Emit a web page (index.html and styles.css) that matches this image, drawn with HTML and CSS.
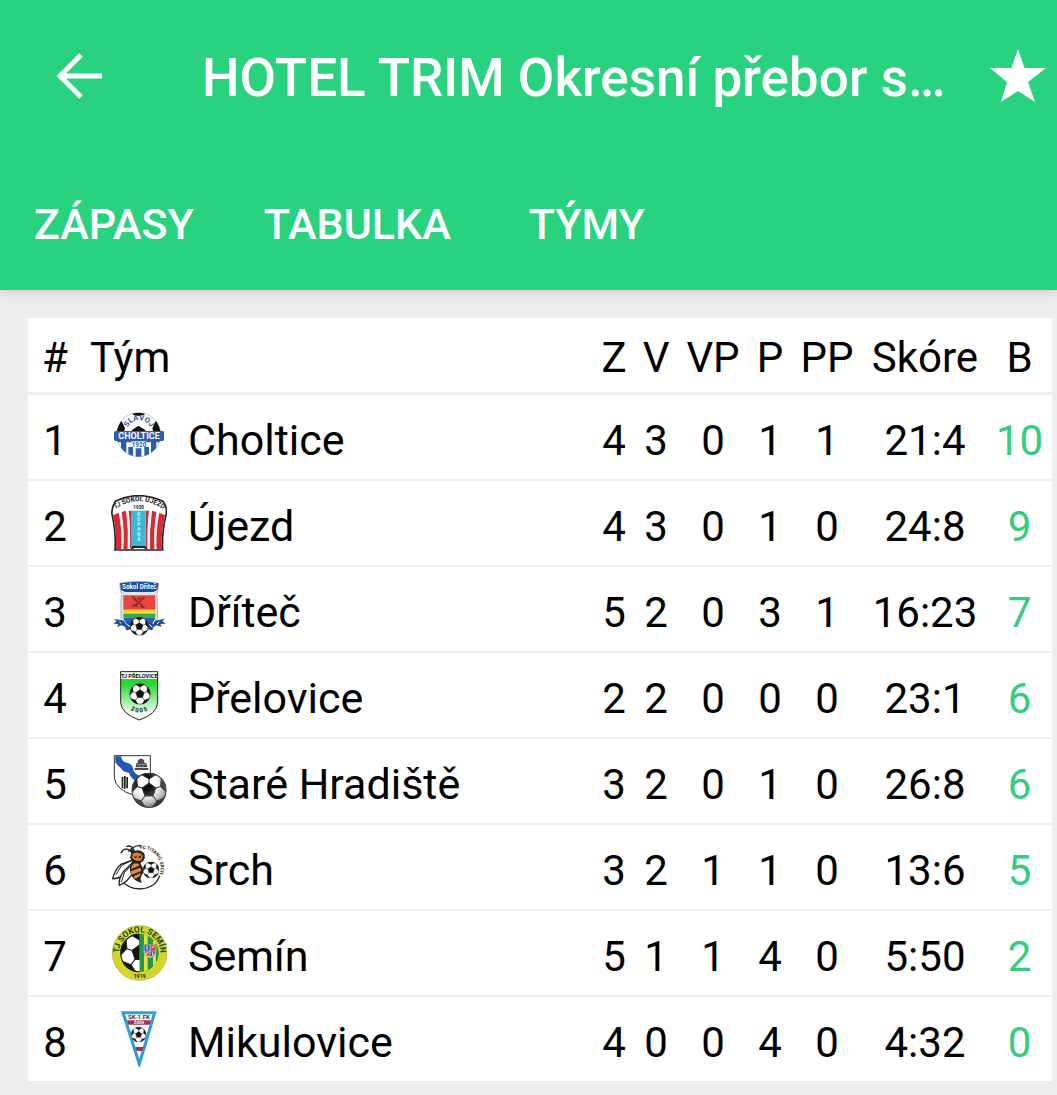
FILE: index.html
```html
<!DOCTYPE html>
<html lang="cs">
  <head>
    <meta charset="UTF-8" />
    <meta name="viewport" content="width=device-width, initial-scale=1.0" />
    <title>HOTEL TRIM Okresní přebor</title>
    <link rel="stylesheet" href="styles.css">
  </head>
  <body>
    <!-- shared football used by the club badges -->
    <svg class="defs" aria-hidden="true">
      <symbol id="ball" viewBox="-52 -52 104 104">
        <circle r="50" fill="#fff" stroke="#111" stroke-width="3" />
        <g stroke="#222" stroke-width="3">
          <path d="M0-19V-42M18-6L40-13M11 15L25 34M-11 15L-25 34M-18-6L-40-13M-18-46L0-38L18-46M38-32L38-13L49 2M42 27L25 32L13 48M-42 27L-25 32L-13 48M-38-32L-38-13L-49 2" fill="none" />
          <path d="M0-21L20-7L12 17L-12 17L-20-7Z" fill="#111" />
          <path d="M-20-46L0-34L20-46Q0-53-20-46ZM36-34L34-12L49 4Q51-17 36-34ZM44 23L23 31L12 48Q34 43 44 23ZM-44 23L-23 31L-12 48Q-34 43-44 23ZM-36-34L-34-12L-49 4Q-51-17-36-34Z" fill="#111" />
        </g>
      </symbol>
    </svg>

    <header>
      <div class="top-bar">
        <button class="icon-btn back" aria-label="Zpět">
          <svg width="46" height="46" viewBox="0 0 46 46">
            <path d="M46 23H6M25 2L4 23L25 44" fill="none" stroke="#fff" stroke-width="5" />
          </svg>
        </button>
        <h1>HOTEL TRIM Okresní přebor s…</h1>
        <button class="icon-btn star" aria-label="Oblíbené">
          <svg width="56" height="54" viewBox="0 0 56 54">
            <path d="M28 0L34.500 19H56L38 33L45 53L28 42L11 53L17 33L0 19H21.500Z" fill="#fff" />
          </svg>
        </button>
      </div>
      <nav class="tabs">
        <a href="#zapasy">ZÁPASY</a>
        <a href="#tabulka">TABULKA</a>
        <a href="#tymy">TÝMY</a>
      </nav>
    </header>

    <main>
      <table class="standings">
        <colgroup>
          <col class="col-rank" />
          <col />
          <col class="col-num" />
          <col class="col-num" />
          <col class="col-pair" />
          <col class="col-num" />
          <col class="col-pair" />
          <col class="col-score" />
          <col class="col-points" />
        </colgroup>
        <thead>
          <tr>
            <th>#</th>
            <th class="team-head">Tým</th>
            <th>Z</th>
            <th>V</th>
            <th>VP</th>
            <th>P</th>
            <th>PP</th>
            <th>Skóre</th>
            <th>B</th>
          </tr>
        </thead>
        <tbody>
          <tr>
            <td>1</td>
            <td class="team">
              <div class="team-row">
                <svg class="logo" viewBox="18 12 168 168">
                  <clipPath id="c1"><circle cx="101" cy="89" r="66" /></clipPath>
                  <circle cx="101" cy="89" r="66" fill="#fff" stroke="#aab" stroke-width="2" />
                  <g clip-path="url(#c1)">
                    <path d="M78 20H124L116 30L100 33L86 30ZM32 86L38 56L50 48L60 70L56 84ZM170 86L164 56L152 48L142 70L146 84ZM76 84L82 74L100 62L120 74L126 84Z" fill="#111" />
                    <path d="M36 100H166V112H36ZM48 104H64V150H48ZM70 126H84V160H70ZM92 130H109V160H92ZM118 126H132V160H118ZM138 104H154V150H138Z" fill="#2d5bb0" />
                  </g>
                  <path id="arc1" d="M66 74A37 37 0 0 1 138 74" fill="none" />
                  <text class="badge-text" font-size="23" fill="#2d5bb0" text-anchor="middle"><textPath href="#arc1" startOffset="50%">SLAVOJ</textPath></text>
                  <rect x="27" y="78" width="150" height="30" rx="5" fill="#2d5bb0" />
                  <text class="badge-text" x="102" y="103" font-size="27" fill="#fff" text-anchor="middle">CHOLTICE</text>
                  <rect x="80" y="109" width="44" height="17" fill="#fff" />
                  <text class="badge-text" x="102" y="125" font-size="19" fill="#2d5bb0" text-anchor="middle">1920</text>
                </svg>
                <span>Choltice</span>
              </div>
            </td>
            <td>4</td><td>3</td><td>0</td><td>1</td><td>1</td><td>21:4</td><td class="points">10</td>
          </tr>
          <tr>
            <td>2</td>
            <td class="team">
              <div class="team-row">
                <svg class="logo" viewBox="18 15 168 168">
                  <path d="M30 180Q34 130 21 73Q19 55 31 34Q100 0 174 34Q188 52 183 74Q170 130 173 180Z" fill="#fff" stroke="#222" stroke-width="5" />
                  <path d="M24 76L41 68Q52 120 49 178H32Q36 130 24 76ZM50 66L63 62Q71 120 68 178H55Q59 120 50 66ZM71 62H80V174H75Q77 110 71 62ZM180 76L163 68Q152 120 155 178H171Q167 130 180 76ZM154 66L141 62Q133 120 135 178H148Q145 120 154 66ZM132 62H122V174H127Q126 110 132 62Z" fill="#d42b35" />
                  <path d="M80 62H122V168H80Z" fill="#38b9d7" />
                  <text class="badge-text vertical" x="101" y="65" fill="#d7f5fb">KOPANÁ</text>
                  <path d="M76 180L82 168H121L129 180L115 174H88Z" fill="#222" />
                  <path id="arc2" d="M28 59Q100 8 178 59" fill="none" />
                  <text class="badge-text" font-size="20" fill="#222" text-anchor="middle"><textPath href="#arc2" startOffset="50%">TJ SOKOL ÚJEZD</textPath></text>
                  <text class="badge-text" x="101" y="58" font-size="14" fill="#222" text-anchor="middle">1930</text>
                </svg>
                <span>Újezd</span>
              </div>
            </td>
            <td>4</td><td>3</td><td>0</td><td>1</td><td>0</td><td>24:8</td><td class="points">9</td>
          </tr>
          <tr>
            <td>3</td>
            <td class="team">
              <div class="team-row">
                <svg class="logo" viewBox="18 18 168 168">
                  <path d="M44 25Q102 13 161 25L158 49Q152 58 157 72V130Q150 155 103 178Q55 155 48 130V72Q53 58 47 49Z" fill="#dfe5ec" stroke="#aeb5bf" stroke-width="3" />
                  <path d="M45 25Q102 15 160 25L157 45L145 51H60L48 45Z" fill="#174d9d" />
                  <path d="M55 61H151V104H55Z" fill="#e84545" />
                  <path d="M55 104H151V116H55Z" fill="#f5d52d" />
                  <path d="M55 116H151V128H55Z" fill="#35a852" />
                  <path d="M55 128H151Q144 148 125 156H81Q60 147 55 128Z" fill="#3159b7" />
                  <path d="M86 70L114 94M119 66L88 94M82 65L94 76M82 94L94 88L98 96M108 94L119 98M98 73L107 68" stroke="#8b2b16" stroke-width="5" fill="none" />
                  <path d="M26 131L57 137L66 158L50 151L36 156L40 147L25 146L35 139ZM181 131L150 137L141 158L155 151L170 156L166 147L182 146L172 139ZM57 147L82 140V162L64 166ZM149 147L124 140V162L142 166Z" fill="#1d4e96" />
                  <path d="M43 140L49 146M64 147L75 155M163 140L156 147M133 148L142 157" stroke="#fff" stroke-width="3" />
                  <use href="#ball" x="75" y="126" width="56" height="56" />
                  <text class="badge-text" x="103" y="43" font-size="19" fill="#fff" text-anchor="middle">Sokol Dříteč</text>
                </svg>
                <span>Dříteč</span>
              </div>
            </td>
            <td>5</td><td>2</td><td>0</td><td>3</td><td>1</td><td>16:23</td><td class="points">7</td>
          </tr>
          <tr>
            <td>4</td>
            <td class="team">
              <div class="team-row">
                <svg class="logo" viewBox="18 21 168 168">
                  <linearGradient id="g4" x1="0" y1="0" x2="0" y2="1">
                    <stop offset="0.250" stop-color="#25d832" />
                    <stop offset="0.900" stop-color="#fff" />
                  </linearGradient>
                  <path d="M47 35H158V128Q156 161 103 180Q49 161 47 128Z" fill="url(#g4)" stroke="#222" stroke-width="3" />
                  <path d="M49 37H156V57H49Z" fill="#fff" />
                  <text class="badge-text" x="103" y="54" font-size="17" fill="#111" text-anchor="middle">TJ PŘELOVICE</text>
                  <use href="#ball" x="73" y="70" width="64" height="64" />
                  <path id="arc4" d="M70 146Q103 168 138 146" fill="none" />
                  <text class="badge-text" font-size="18" letter-spacing="4" fill="#111" text-anchor="middle"><textPath href="#arc4" startOffset="50%">2005</textPath></text>
                </svg>
                <span>Přelovice</span>
              </div>
            </td>
            <td>2</td><td>2</td><td>0</td><td>0</td><td>0</td><td>23:1</td><td class="points">6</td>
          </tr>
          <tr>
            <td>5</td>
            <td class="team">
              <div class="team-row">
                <svg class="logo" viewBox="18 15 168 168">
                  <radialGradient id="g5" cx="0.400" cy="0.300" r="0.700">
                    <stop offset="0.300" stop-color="#fff" stop-opacity="0" />
                    <stop offset="1" stop-color="#444" stop-opacity="0.700" />
                  </radialGradient>
                  <path d="M28 23H136V90Q130 128 83 140Q34 126 28 90Z" fill="#fff" stroke="#333" stroke-width="3" />
                  <path d="M31 25H48Q50 42 68 45Q84 49 86 70Q94 82 110 84L94 98Q78 93 72 74Q58 75 48 61Q36 53 31 42Z" fill="#2455ba" />
                  <path d="M98 38L104 32H112L118 38V45H124L127 58H92L94 45H98ZM89 60H130V66H89Z" fill="#444b55" />
                  <path d="M95 49H124M104 53V58M114 53V58" stroke="#999" stroke-width="3" />
                  <path d="M50 87H55V122L50 119ZM57 84H62V122H57ZM64 87H69V121H64Z" fill="#222" />
                  <use href="#ball" x="79" y="74" width="106" height="106" />
                  <circle cx="132" cy="127" r="52" fill="url(#g5)" />
                </svg>
                <span>Staré Hradiště</span>
              </div>
            </td>
            <td>3</td><td>2</td><td>0</td><td>1</td><td>0</td><td>26:8</td><td class="points">6</td>
          </tr>
          <tr>
            <td>6</td>
            <td class="team">
              <div class="team-row">
                <svg class="logo" viewBox="18 12 168 168">
                  <path d="M70 50Q90 28 108 33M48 132Q66 162 106 162Q152 159 164 122" fill="none" stroke="#222" stroke-width="4" />
                  <path d="M86 74L48 88Q30 104 23 131Q47 134 82 96Z" fill="#fff" stroke="#222" stroke-width="4" />
                  <path d="M84 82L55 110Q40 132 43 151Q66 144 91 104Z" fill="#fff" stroke="#222" stroke-width="4" />
                  <path d="M84 75L50 91L33 119M79 91L58 113L49 141" fill="none" stroke="#222" stroke-width="3" />
                  <path d="M72 46L82 42L87 49Q103 40 117 54Q123 66 115 78L106 84L113 98Q118 112 109 122Q104 134 111 144Q86 138 78 119Q70 99 81 80L75 67L79 54Z" fill="#222" />
                  <path d="M83 56Q99 47 112 59Q115 72 105 78Q88 80 81 67Z" fill="#db7a28" />
                  <path d="M82 89Q97 80 104 91L78 103ZM77 109L106 98L109 108L80 119ZM84 125L107 113L104 124L90 132Z" fill="#e28a3d" />
                  <path d="M86 64L97 65L91 70ZM97 67L109 61L107 69Z" fill="#222" />
                  <path d="M80 50Q57 32 48 55M89 52Q82 27 64 35" fill="none" stroke="#222" stroke-width="4" />
                  <use href="#ball" x="113" y="80" width="50" height="50" />
                  <path id="arc6" d="M108 41A58 58 0 0 1 165 114" fill="none" />
                  <text class="badge-text" font-size="14" fill="#222" text-anchor="middle"><textPath href="#arc6" startOffset="50%">FC TITANIC SRCH</textPath></text>
                </svg>
                <span>Srch</span>
              </div>
            </td>
            <td>3</td><td>2</td><td>1</td><td>1</td><td>0</td><td>13:6</td><td class="points">5</td>
          </tr>
          <tr>
            <td>7</td>
            <td class="team">
              <div class="team-row">
                <svg class="logo" viewBox="18 15 168 168">
                  <clipPath id="c7"><path d="M104 40H40V160H104Z" /></clipPath>
                  <clipPath id="d7"><circle cx="104" cy="99" r="57" /></clipPath>
                  <circle cx="104" cy="99" r="82" fill="#d5d62b" stroke="#a7a824" stroke-width="2" />
                  <g clip-path="url(#c7)"><use href="#ball" x="45" y="40" width="118" height="118" /></g>
                  <g clip-path="url(#d7)">
                    <path d="M104 40H170V160H104Z" fill="#229947" />
                    <path d="M117 40H128V160H117ZM144 40H153V160H144Z" fill="#e5df36" />
                  </g>
                  <path d="M116 74H154V96Q152 109 135 114Q118 109 116 96Z" fill="#eee" stroke="#7e8b68" stroke-width="2" />
                  <path d="M118 76H134V92H118ZM136 94H152Q150 106 136 110Z" fill="#2367b4" />
                  <path d="M136 76H152V92H136ZM118 94H134V110Q121 106 118 94Z" fill="#d34542" />
                  <path d="M126 78V89M140 84L148 79M122 101L130 97M143 97V105" stroke="#fff" stroke-width="3" />
                  <path id="arc7" d="M45 118A62 62 0 1 1 163 118" fill="none" />
                  <text class="badge-text" font-size="25" fill="#174d25" text-anchor="middle"><textPath href="#arc7" startOffset="50%">TJ SOKOL SEMÍN</textPath></text>
                  <text class="badge-text" x="104" y="175" font-size="16" fill="#222" text-anchor="middle">1919</text>
                </svg>
                <span>Semín</span>
              </div>
            </td>
            <td>5</td><td>1</td><td>1</td><td>4</td><td>0</td><td>5:50</td><td class="points">2</td>
          </tr>
          <tr>
            <td>8</td>
            <td class="team">
              <div class="team-row">
                <svg class="logo" viewBox="18 24 168 168">
                  <path d="M54 29H149L103 183Z" fill="#fff" stroke="#2c9fdb" stroke-width="9" />
                  <text class="badge-text" x="102" y="48" font-size="18" fill="#333" text-anchor="middle">SK-1.FK</text>
                  <path d="M66 52H138L134 65H70ZM91 132H116L112 144H95Z" fill="#9d3351" />
                  <text class="badge-text" x="102" y="63" font-size="12" fill="#fff" text-anchor="middle">ŽIŽIN</text>
                  <use href="#ball" x="78" y="72" width="46" height="46" />
                </svg>
                <span>Mikulovice</span>
              </div>
            </td>
            <td>4</td><td>0</td><td>0</td><td>4</td><td>0</td><td>4:32</td><td class="points">0</td>
          </tr>
        </tbody>
      </table>
    </main>
  </body>
</html>
```
FILE: styles.css
```css
:root {
  --green: #29d27f;
  --points: #35cc80;
  --bg: #ededed;
  --line: #eeeeee;
}

* {
  box-sizing: border-box;
}

body {
  margin: 0;
  font-family: Roboto, sans-serif;
  background: var(--bg);
  color: #000;
}

.defs {
  position: absolute;
  width: 0;
  height: 0;
}

header {
  background: var(--green);
  box-shadow: 0 2px 10px rgba(0, 0, 0, 0.15);
}

.top-bar {
  display: flex;
  align-items: center;
  height: 152px;
  padding: 0 11px 0 56px;
}

.icon-btn {
  display: flex;
  padding: 0;
  border: 0;
  background: none;
  cursor: pointer;
}

.back {
  margin-right: 100px;
}

h1 {
  flex: 1;
  margin: 0;
  padding-top: 4px;
  font-size: 53px;
  font-weight: 500;
  line-height: 64px;
  color: #fff;
  white-space: nowrap;
}

.tabs {
  display: flex;
  gap: 2px;
  height: 138px;
}

.tabs a {
  min-width: 200px;
  padding: 6px 34px 0;
  font-size: 43px;
  font-weight: 500;
  line-height: 132px;
  text-align: center;
  color: #fff;
  text-decoration: none;
}

main {
  padding: 28px 5px 14px 28px;
}

.standings {
  width: 100%;
  table-layout: fixed;
  border-collapse: separate;
  border-spacing: 0;
  background: #fff;
  font-size: 42px;
  line-height: 50px;
}

.col-rank {
  width: 54px;
}

.col-num {
  width: 42px;
}

.col-pair {
  width: 72px;
}

.col-score {
  width: 124px;
}

.col-points {
  width: 65px;
}

th,
td {
  padding: 8px 0 0;
  text-align: center;
  white-space: nowrap;
}

th {
  height: 77px;
  padding-top: 6px;
  font-weight: 400;
  border-bottom: 3px solid var(--line);
}

td {
  height: 86px;
  border-bottom: 2px solid var(--line);
}

tr:last-child td {
  height: 84px;
  border-bottom: 0;
}

.team-head {
  padding-left: 8px;
  text-align: left;
}

.team {
  padding: 0 0 0 29px;
}

.team-row {
  display: flex;
  align-items: center;
  gap: 21px;
  font-size: 43px;
}

.team-row span {
  padding-top: 6px;
}

.logo {
  width: 56px;
  height: 56px;
}

.points {
  color: var(--points);
}

.badge-text {
  font-weight: 700;
}

.vertical {
  writing-mode: vertical-rl;
  text-orientation: upright;
  font-size: 14px;
}
```
